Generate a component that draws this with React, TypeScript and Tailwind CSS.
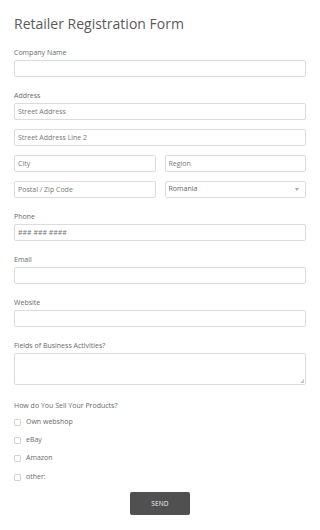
import { useState } from "react";

const inputCls =
  "block w-full h-[17px] border border-[#dcdcdc] rounded-[2px] bg-white px-[3px] text-[7px] text-[#666] placeholder:text-[#777] outline-none";

function Label({ children }: { children: React.ReactNode }) {
  return <div className="h-[10px] leading-[10px] text-[7px] text-[#6a6a6a] mb-[2px]">{children}</div>;
}

export default function App() {
  const [country, setCountry] = useState("Romania");
  const channels = ["Own webshop", "eBay", "Amazon", "other:"];

  return (
    <main className="min-h-[530px] bg-white px-[14px] pt-[14px] font-['Open_Sans',sans-serif]">
      <h1 className="h-[20px] leading-[20px] text-[14px] text-[#5a5a5a] mb-[14px]">
        Retailer Registration Form
      </h1>

      <div className="w-[292px] flex flex-col gap-[14px]">
        <div>
          <Label>Company Name</Label>
          <input className={inputCls} />
        </div>

        <div>
          <Label>Address</Label>
          <div className="flex flex-col gap-[9px]">
            <input className={inputCls} placeholder="Street Address" />
            <input className={inputCls} placeholder="Street Address Line 2" />
            <div className="grid grid-cols-2 gap-[9px]">
              <input className={inputCls} placeholder="City" />
              <input className={inputCls} placeholder="Region" />
            </div>
            <div className="grid grid-cols-2 gap-[9px]">
              <input className={inputCls} placeholder="Postal / Zip Code" />
              <div className="relative">
                <select
                  value={country}
                  onChange={(e) => setCountry(e.target.value)}
                  className={inputCls + " appearance-none"}
                >
                  <option>Romania</option>
                  <option>Bulgaria</option>
                  <option>Hungary</option>
                </select>
                <span className="absolute right-[7px] top-[7px] w-0 h-0 border-l-[2.5px] border-r-[2.5px] border-t-[3px] border-l-transparent border-r-transparent border-t-[#aaa] pointer-events-none" />
              </div>
            </div>
          </div>
        </div>

        <div>
          <Label>Phone</Label>
          <input className={inputCls} placeholder="### ### ####" />
        </div>

        <div>
          <Label>Email</Label>
          <input className={inputCls} />
        </div>

        <div>
          <Label>Website</Label>
          <input className={inputCls} />
        </div>

        <div>
          <Label>Fields of Business Activities?</Label>
          <div className="relative">
            <textarea className="block w-full h-[32px] resize-none border border-[#dcdcdc] rounded-[2px] bg-white px-[3px] text-[7px] text-[#666] outline-none" />
            {/* resize grip */}
            <svg className="absolute right-[2px] bottom-[2px] pointer-events-none" width="4" height="4" viewBox="0 0 4 4">
              <path d="M4 0L4 4L0 4Z" fill="#c8c8c8" />
            </svg>
          </div>
        </div>

        <div className="mt-[2px]">
          <div className="h-[10px] leading-[10px] text-[7px] text-[#6a6a6a] mb-[2px]">
            How do You Sell Your Products?
          </div>
          <div className="flex flex-col">
            {channels.map((c) => (
              <label key={c} className="flex items-center h-[18.3px] text-[7px] text-[#6a6a6a]">
                <span className="w-[7px] h-[7px] border border-[#d4d4d4] rounded-[1px] mr-[5px]" />
                {c}
              </label>
            ))}
          </div>
        </div>
      </div>

      <div className="flex justify-center mt-[6px] w-[292px]">
        <button
          type="button"
          className="w-[60px] h-[23px] bg-[#505050] rounded-[2px] text-[6.5px] text-[#eee] tracking-[0.2px]"
        >
          SEND
        </button>
      </div>
    </main>
  );
}
